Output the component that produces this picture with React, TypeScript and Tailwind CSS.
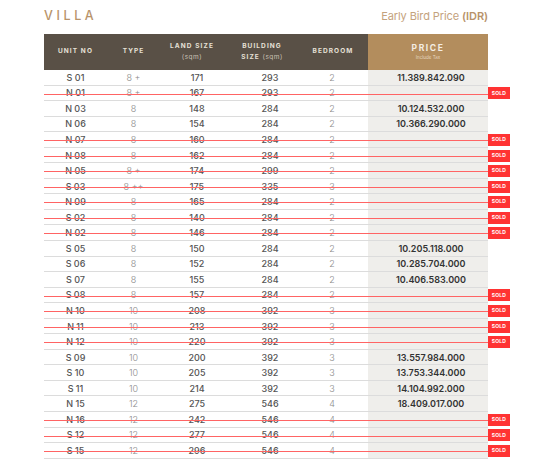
import React from "react";

type Row = [string, string, string, string, string, string | null];

const rows: Row[] = [
  ["S 01", "8 +", "171", "293", "2", "11.389.842.090"],
  ["N 01", "8 +", "167", "293", "2", null],
  ["N 03", "8", "148", "284", "2", "10.124.532.000"],
  ["N 06", "8", "154", "284", "2", "10.366.290.000"],
  ["N 07", "8", "160", "284", "2", null],
  ["N 08", "8", "162", "284", "2", null],
  ["N 05", "8 +", "174", "299", "2", null],
  ["S 03", "8 ++", "175", "335", "3", null],
  ["N 09", "8", "165", "284", "2", null],
  ["S 02", "8", "140", "284", "2", null],
  ["N 02", "8", "146", "284", "2", null],
  ["S 05", "8", "150", "284", "2", "10.205.118.000"],
  ["S 06", "8", "152", "284", "2", "10.285.704.000"],
  ["S 07", "8", "155", "284", "2", "10.406.583.000"],
  ["S 08", "8", "157", "284", "2", null],
  ["N 10", "10", "208", "392", "3", null],
  ["N 11", "10", "213", "392", "3", null],
  ["N 12", "10", "220", "392", "3", null],
  ["S 09", "10", "200", "392", "3", "13.557.984.000"],
  ["S 10", "10", "205", "392", "3", "13.753.344.000"],
  ["S 11", "10", "214", "392", "3", "14.104.992.000"],
  ["N 15", "12", "275", "546", "4", "18.409.017.000"],
  ["N 16", "12", "242", "546", "4", null],
  ["S 12", "12", "277", "546", "4", null],
  ["S 15", "12", "296", "546", "4", null],
];

const grid = "grid grid-cols-[63px_53px_72px_66px_70px_120px]";

export default function App() {
  return (
    <div
      className="w-[533px] h-[467px] bg-white pl-[44px] pt-[8px]"
      style={{ fontFamily: "Inter, 'Open Sans', sans-serif" }}
    >
      <div className="w-[444px] h-[16px] flex items-center justify-between mb-[10px]">
        <span className="text-[12.5px] font-medium tracking-[3.6px] text-[#b8936a] leading-none">VILLA</span>
        <span className="text-[11px] text-[#c4a27d] leading-none tracking-[-0.1px]">
          Early Bird Price <span className="font-semibold text-[#b8936a]">(IDR)</span>
        </span>
      </div>

      <div className={`${grid} w-[444px] h-[36px] text-[#e6e0d6]`}>
        <div className="bg-[#595046] flex items-center justify-center text-[6.5px] font-bold tracking-[1.1px]">UNIT NO</div>
        <div className="bg-[#595046] flex items-center justify-center text-[6.5px] font-bold tracking-[1.1px]">TYPE</div>
        <div className="bg-[#595046] flex flex-col items-center justify-center pr-[8px] leading-[11px]">
          <span className="text-[6.5px] font-bold tracking-[1.1px]">LAND SIZE</span>
          <span className="text-[6.5px] tracking-[0.5px] text-[#c9c1b5]">(sqm)</span>
        </div>
        <div className="bg-[#595046] flex flex-col items-center justify-center pr-[6px] leading-[11px]">
          <span className="text-[6.5px] font-bold tracking-[1.1px]">BUILDING</span>
          <span className="text-[6.5px] font-bold tracking-[1.1px]">
            SIZE <span className="font-normal tracking-[0.5px] text-[#c9c1b5]">(sqm)</span>
          </span>
        </div>
        <div className="bg-[#595046] flex items-center justify-center text-[6.5px] font-bold tracking-[1.1px]">BEDROOM</div>
        <div className="bg-[#b38d5d] flex flex-col items-center justify-center leading-[11px]">
          <span className="text-[8.5px] font-bold tracking-[1.6px] text-[#f3ece2]">PRICE</span>
          <span className="text-[4.5px] text-[#e6d7c0] leading-[7px]">Include Tax</span>
        </div>
      </div>

      <div className="flex flex-col">
        {rows.map((r, i) => {
          const sold = r[5] === null;
          return (
            <div key={i} className="relative flex h-[15.56px]">
              <div className={`${grid} w-[444px] h-full text-[9px] leading-none`}>
                <div className="flex items-center justify-center border-b border-[#dcdcdc] font-medium text-[#545454]">{r[0]}</div>
                <div className="flex items-center justify-center border-b border-[#dcdcdc] font-light text-[#8a8a8a]">{r[1]}</div>
                <div className="flex items-center justify-center border-b border-[#dcdcdc] pl-[2px] font-medium text-[#545454]">{r[2]}</div>
                <div className="flex items-center justify-center border-b border-[#dcdcdc] pl-[10px] font-medium text-[#545454]">{r[3]}</div>
                <div className="flex items-center justify-center border-b border-[#dcdcdc] pr-[2px] font-light text-[#8a8a8a]">{r[4]}</div>
                <div className="flex items-center justify-center border-b border-[#dcdcdc] bg-[#efeeeb] pl-[6px] font-semibold text-[#333333]">{r[5] ?? ""}</div>
              </div>
              {sold && (
                <>
                  <div className="absolute left-0 top-[8px] w-[450px] h-px bg-[#ff6464]" />
                  <div className="relative z-10 ml-0 self-center w-[22px] h-[12px] bg-[#ff3333] flex items-center justify-center text-[5px] font-bold text-white tracking-[0.2px]">
                    SOLD
                  </div>
                </>
              )}
            </div>
          );
        })}
      </div>
    </div>
  );
}
